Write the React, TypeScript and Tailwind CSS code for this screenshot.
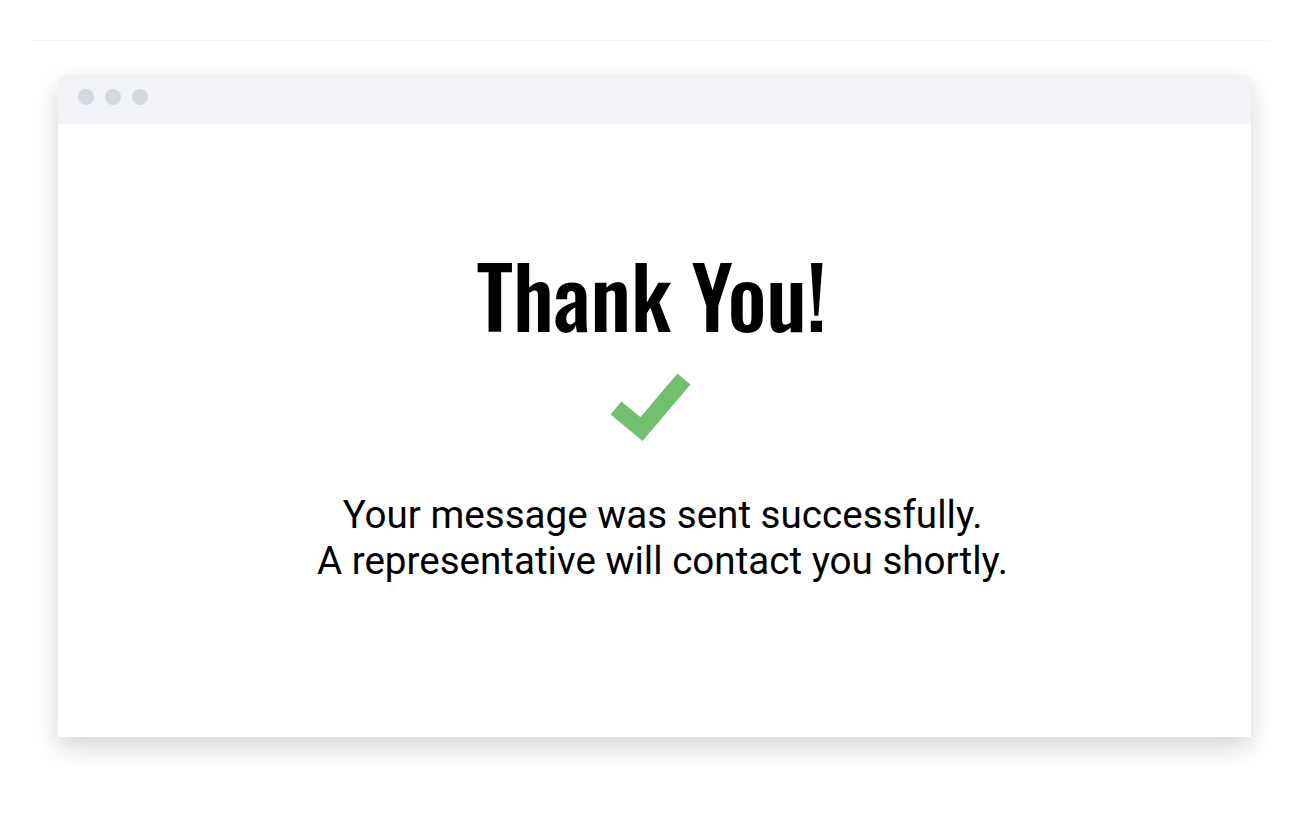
function CheckMark() {
  return (
    <svg width="84" height="74" viewBox="608 370 84 74" className="block">
      <polyline
        points="616,408 641.5,429 684,379"
        fill="none"
        stroke="#72c06d"
        strokeWidth="17"
        strokeLinejoin="miter"
        strokeLinecap="butt"
      />
    </svg>
  );
}

function WindowBar() {
  return (
    <div className="flex h-[49px] items-start gap-[11px] rounded-t-[6px] bg-[#f2f3f7] pl-5 pt-[14px]">
      <span className="h-4 w-4 rounded-full bg-[#d6d8e1]" />
      <span className="h-4 w-4 rounded-full bg-[#d6d8e1]" />
      <span className="h-4 w-4 rounded-full bg-[#d6d8e1]" />
    </div>
  );
}

export default function App() {
  return (
    <div className="min-h-[813px] bg-white pt-10">
      <div className="mx-[31px] h-px bg-[#f5f5f7]" />
      <div className="ml-[58px] mt-[34px] w-[1193px] rounded-t-[6px] bg-white shadow-[0_10px_24px_rgba(0,0,0,0.17)]">
        <WindowBar />
        <div className="flex h-[613px] flex-col items-center pt-[120px]">
          <h1 className="mr-[6px] font-['Oswald','Roboto_Condensed',sans-serif] text-[85px] leading-[100px] font-medium text-black">
            Thank You!
          </h1>
          <div className="mr-[9px] mt-[26px]">
            <CheckMark />
          </div>
          <p className="ml-4 mt-[48px] text-center font-['Roboto',sans-serif] text-[38.6px] leading-[46px] text-black">
            Your message was sent successfully.
            <br />
            A representative will contact you shortly.
          </p>
        </div>
      </div>
    </div>
  );
}
